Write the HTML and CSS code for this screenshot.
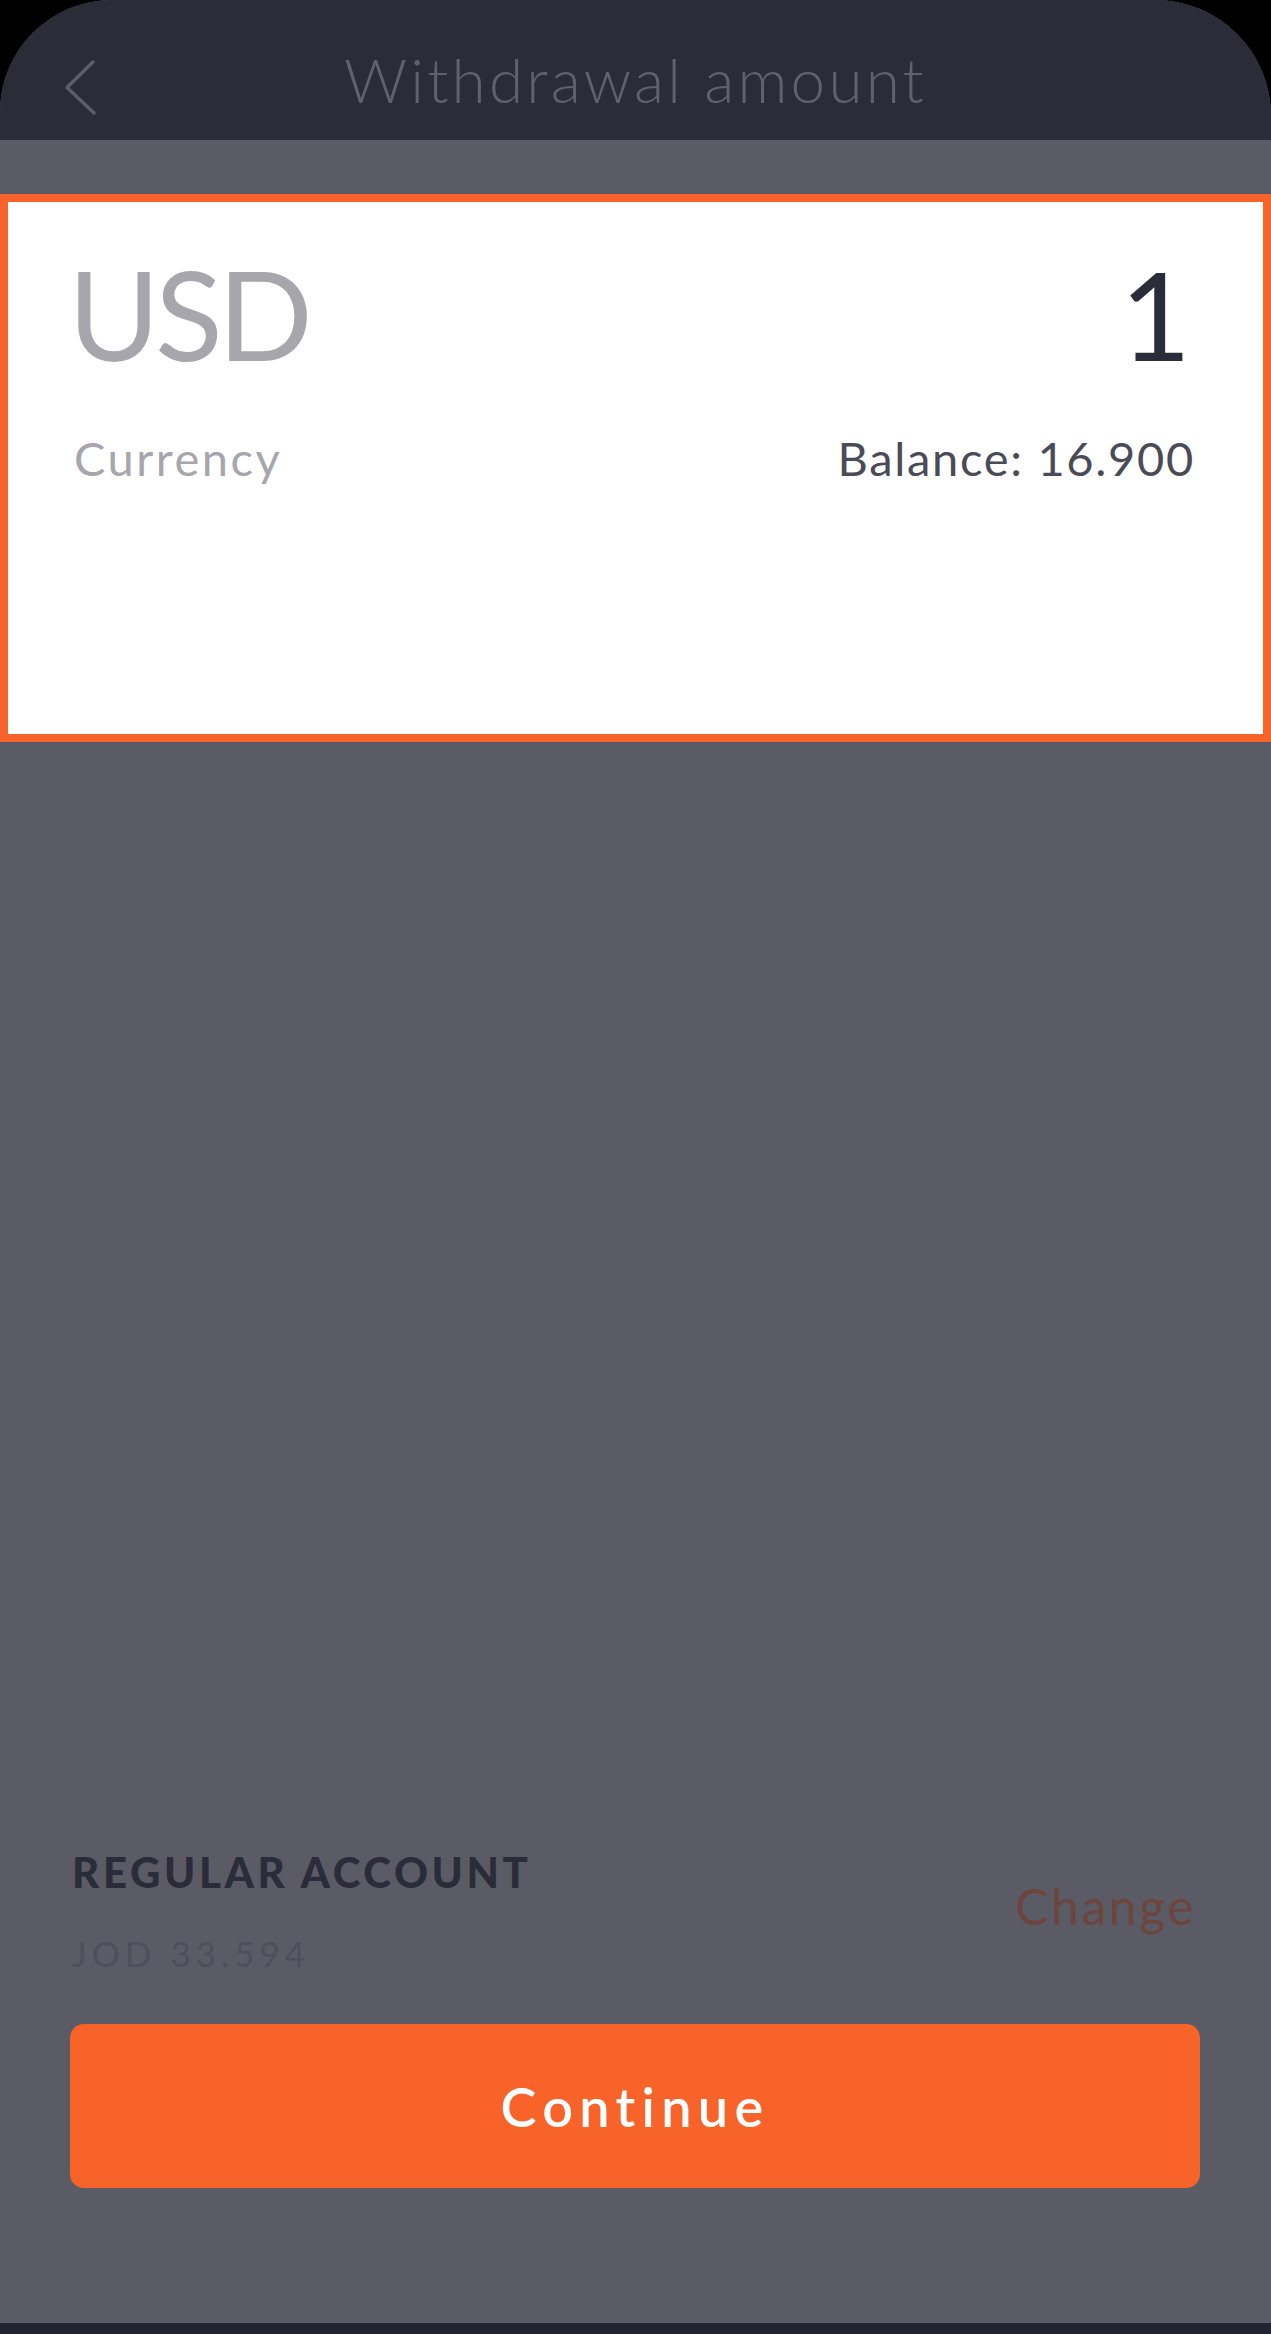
FILE: index.html
```html
<!DOCTYPE html>
<html lang="en">
<head>
<meta charset="utf-8">
<title>Withdrawal amount</title>
<link rel="stylesheet" href="styles.css">
</head>
<body>
<div class="screen">
  <header class="topbar">
    <div class="topbar-side">
      <svg class="back" width="36" height="58" viewBox="0 0 36 58" aria-hidden="true">
        <polyline points="31,3 5,28.5 32,54" fill="none" stroke="#5c5d6a" stroke-width="3.5" stroke-linecap="round" stroke-linejoin="round"/>
      </svg>
    </div>
    <h1 class="title">Withdrawal amount</h1>
    <div class="topbar-side"></div>
  </header>

  <section class="amount-card">
    <div class="row row-main">
      <span class="currency-code">USD</span>
      <span class="amount">1</span>
    </div>
    <div class="row row-sub">
      <span class="currency-label">Currency</span>
      <span class="balance">Balance: 16.900</span>
    </div>
  </section>

  <section class="bottom">
    <div class="account">
      <div class="account-info">
        <div class="account-name">REGULAR ACCOUNT</div>
        <div class="account-balance">JOD 33.594</div>
      </div>
      <span class="change">Change</span>
    </div>
    <button class="continue" type="button">Continue</button>
  </section>

  <div class="home-strip"></div>
</div>
</body>
</html>
```

FILE: styles.css
```css
html, body {
  margin: 0;
  padding: 0;
  background: #000;
}

body {
  font-family: Lato, "Open Sans", "Liberation Sans", sans-serif;
}

.screen {
  width: 1271px;
  height: 2334px;
  background: #5b5b66;
  border-radius: 112px 116px 0 0;
  overflow: hidden;
  display: flex;
  flex-direction: column;
}

.topbar {
  height: 140px;
  box-sizing: border-box;
  background: #2b2c38;
  display: grid;
  grid-template-columns: 1fr auto 1fr;
  align-items: start;
  padding-top: 48px;
  flex: none;
}

.topbar-side {
  display: flex;
}

.back {
  margin-left: 62px;
  margin-top: 11px;
}

.title {
  margin: 0;
  font-size: 62px;
  line-height: 1;
  font-weight: 300;
  color: #60616e;
  letter-spacing: 3.2px;
}

.amount-card {
  margin-top: 54px;
  height: 548px;
  box-sizing: border-box;
  border: 8px solid #f7632a;
  background: #fff;
  padding: 49px 68px 0 66px;
  flex: none;
}

.row {
  display: flex;
  justify-content: space-between;
  align-items: baseline;
}

.currency-code {
  font-size: 125px;
  line-height: 1;
  font-weight: 400;
  color: #a7a6ad;
  letter-spacing: -5px;
  margin-left: -6px;
}

.amount {
  font-size: 122px;
  line-height: 1;
  font-weight: 400;
  color: #2b2c3a;
  margin-right: 4px;
}

.row-sub {
  margin-top: 59px;
}

.currency-label,
.balance {
  font-size: 47px;
  line-height: 1;
}

.currency-label {
  color: #a7a6ad;
  letter-spacing: 2.5px;
}

.balance {
  color: #4b4b57;
  letter-spacing: 1.7px;
}

.bottom {
  margin-top: auto;
  padding-bottom: 135px;
}

.account {
  display: flex;
  justify-content: space-between;
  align-items: center;
  padding: 0 75px 0 72px;
}

.account-name {
  font-size: 42px;
  line-height: 1;
  font-weight: 900;
  color: #2b2c39;
  letter-spacing: 3.6px;
}

.account-balance {
  margin-top: 43px;
  font-size: 35px;
  line-height: 1;
  color: #4e4f5b;
  letter-spacing: 5px;
}

.change {
  font-size: 50px;
  line-height: 1;
  color: #6c453f;
  letter-spacing: 2.5px;
  padding-bottom: 11px;
}

.continue {
  display: block;
  margin: 53px 71px 0 70px;
  width: calc(100% - 141px);
  height: 164px;
  border: none;
  border-radius: 14px;
  background: #f8632a;
  color: #fff;
  font-family: Lato, "Open Sans", "Liberation Sans", sans-serif;
  font-size: 54px;
  font-weight: 600;
  letter-spacing: 6.3px;
  padding: 0;
}

.home-strip {
  height: 11px;
  background: #22232e;
  flex: none;
}
```
